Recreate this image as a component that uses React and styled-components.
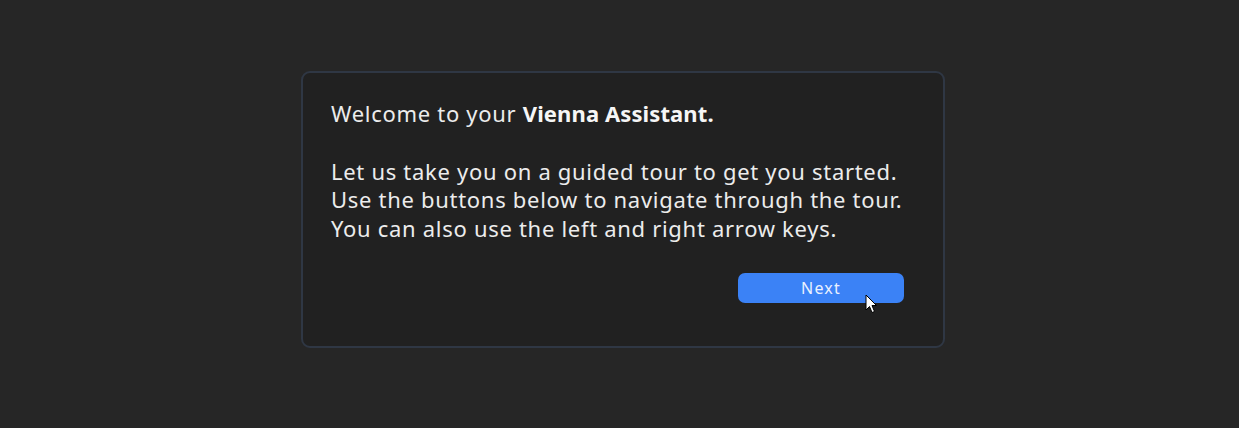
import React from "react";
import styled, { createGlobalStyle } from "styled-components";

const Global = createGlobalStyle`
  html, body { margin: 0; padding: 0; background: #262626; }
  body { font-family: "Noto Sans", "DejaVu Sans", sans-serif; }
`;

const Page = styled.div`
  height: 428px;
  box-sizing: border-box;
  padding: 71px 0 0 301px;
  background: #262626;
`;

const Card = styled.div`
  width: 644px;
  height: 277px;
  box-sizing: border-box;
  border: 2px solid #2f3744;
  border-radius: 9px;
  background: #212121;
  padding: 26px 39px 0 28px;
  display: flex;
  flex-direction: column;
`;

const Text = styled.p`
  margin: 0;
  color: #ececec;
  font-size: 22px;
  line-height: 28.5px;
  letter-spacing: 0.7px;
`;

const Strong = styled.b`
  font-weight: 700;
  letter-spacing: 0.1px;
  color: #f6f6f6;
`;

const Gap = styled.div`
  height: 29px;
`;

const Actions = styled.div`
  display: flex;
  justify-content: flex-end;
  margin-top: 31px;
`;

const Button = styled.button`
  position: relative;
  width: 166px;
  height: 30px;
  border: none;
  border-radius: 7px;
  background: #3b82f6;
  color: #eaf1ff;
  font-family: inherit;
  font-size: 16px;
  letter-spacing: 1.2px;
  cursor: pointer;
  padding: 0;
`;

const Cursor = styled.svg`
  position: absolute;
  left: 127px;
  top: 21px;
  width: 13px;
  height: 20px;
`;

export default function App() {
  return (
    <>
      <Global />
      <Page>
        <Card>
          <Text>
            Welcome to your <Strong>Vienna Assistant.</Strong>
          </Text>
          <Gap />
          <Text>Let us take you on a guided tour to get you started.</Text>
          <Text>Use the buttons below to navigate through the tour.</Text>
          <Text>You can also use the left and right arrow keys.</Text>
          <Actions>
            <Button>
              Next
              <Cursor viewBox="0 0 13 20">
                <path
                  d="M1 1 L1 16 L4.5 12.5 L7 18.5 L9.5 17.5 L7 11.5 L11.5 11.5 Z"
                  fill="#fff"
                  stroke="#000"
                  strokeWidth="1"
                  strokeLinejoin="miter"
                />
              </Cursor>
            </Button>
          </Actions>
        </Card>
      </Page>
    </>
  );
}
